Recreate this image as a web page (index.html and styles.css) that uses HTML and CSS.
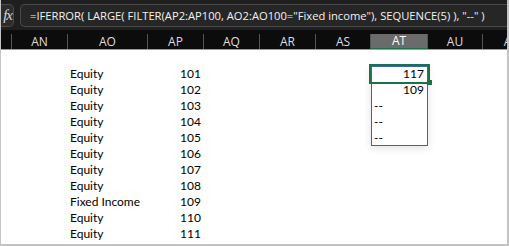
FILE: index.html
```html
<!DOCTYPE html>
<html lang="en">
<head>
    <meta charset="UTF-8">
    <title>Spill</title>
    <link rel="stylesheet" href="styles.css">
</head>
<body>
    <div class="window">
        <div class="formula-bar">
            <div class="fx">fx</div>
            <div class="formula">=IFERROR( LARGE( FILTER(AP2:AP100, AO2:AO100="Fixed income"), SEQUENCE(5) ), "--" )</div>
        </div>

        <div class="col-headers">
            <div class="head"></div>
            <div class="head">AN</div>
            <div class="head">AO</div>
            <div class="head">AP</div>
            <div class="head">AQ</div>
            <div class="head">AR</div>
            <div class="head">AS</div>
            <div class="head active">AT</div>
            <div class="head">AU</div>
            <div class="head">AV</div>
        </div>

        <div class="cells">
            <div class="spacer"></div>

            <div class="spill">
                <div class="value selected">117</div>
                <div class="value">109</div>
                <div class="value text">--</div>
                <div class="value text">--</div>
                <div class="value text">--</div>
            </div>

            <div class="name">Equity</div><div class="num">101</div>
            <div class="name">Equity</div><div class="num">102</div>
            <div class="name">Equity</div><div class="num">103</div>
            <div class="name">Equity</div><div class="num">104</div>
            <div class="name">Equity</div><div class="num">105</div>
            <div class="name">Equity</div><div class="num">106</div>
            <div class="name">Equity</div><div class="num">107</div>
            <div class="name">Equity</div><div class="num">108</div>
            <div class="name">Fixed Income</div><div class="num">109</div>
            <div class="name">Equity</div><div class="num">110</div>
            <div class="name">Equity</div><div class="num">111</div>
        </div>
    </div>
</body>
</html>
```

FILE: styles.css
```css
html, body {
    margin: 0;
    padding: 0;
    background: #fff;
}
.window {
    width: 509px;
    height: 246px;
    box-sizing: border-box;
    border-left: 1px solid #c4c4c4;
    border-right: 2px solid #c4c4c4;
    border-bottom: 2px solid #c4c4c4;
    overflow: hidden;
    background: #fff;
}
.formula-bar {
    height: 30px;
    background: #1f1f1f;
    display: flex;
    align-items: center;
    gap: 6px;
    margin-left: -1px;
}
.fx {
    width: 14px;
    height: 23px;
    box-sizing: border-box;
    background: #2c2c2c;
    border: 1px solid #4a4a4a;
    border-left: none;
    border-radius: 0 5px 5px 0;
    color: #d8d8d8;
    font-family: "Liberation Serif", serif;
    font-style: italic;
    font-size: 15px;
    line-height: 21px;
    text-align: right;
    padding-right: 1px;
    overflow: hidden;
    letter-spacing: -1px;
}
.formula {
    flex: 1;
    height: 23px;
    box-sizing: border-box;
    background: #262626;
    border: 1px solid #4a4a4a;
    border-right: none;
    border-radius: 5px 0 0 5px;
    color: #f2f2f2;
    font-family: "Open Sans", sans-serif;
    font-size: 11.2px;
    line-height: 21px;
    padding-left: 9px;
    white-space: nowrap;
    overflow: hidden;
}
.col-headers {
    display: grid;
    grid-template-columns: 11px 56px 80px 56px 56px 56px 55px 57px 55px 56px;
    height: 18px;
    background: #0c0c0c;
    border-bottom: 1px solid #9a9a9a;
    padding-top: 1px;
    overflow: hidden;
}
.head {
    color: #dedede;
    font-family: "Open Sans", sans-serif;
    font-size: 12px;
    text-align: center;
    border-right: 1px solid #555;
    margin: 3px 0 0;
    line-height: 15px;
}
.head:last-child {
    border-right: none;
}
.head.active {
    background: #6b6b6b;
    color: #fff;
    border-bottom: 2px solid #1e7145;
    line-height: 14px;
}
.cells {
    display: grid;
    grid-template-columns: 11px 56px 80px 56px 56px 56px 55px 57px 55px 1fr;
    grid-auto-rows: 16px;
    font-family: Lato, sans-serif;
    font-size: 12px;
    color: #000;
}
.spacer {
    grid-column: 1 / -1;
}
.name {
    grid-column: 3;
    padding-left: 2px;
    line-height: 16px;
}
.num {
    grid-column: 4;
    text-align: right;
    padding-right: 3px;
    line-height: 16px;
}
.spill {
    grid-column: 8;
    grid-row: 2 / span 5;
    border: 1px solid #3565c0;
    box-shadow: 0 2px 8px rgba(0, 0, 0, 0.12);
    display: flex;
    flex-direction: column;
    position: relative;
}
.value {
    height: 16px;
    line-height: 16px;
    text-align: right;
    padding-right: 3px;
}
.value.text {
    text-align: left;
    padding-left: 2px;
}
.value.selected {
    outline: 2px solid #1e7145;
    outline-offset: 0;
    position: relative;
    margin: -1px -1px 0;
    height: 17px;
    padding-right: 4px;
}
.value.selected::after {
    content: "";
    position: absolute;
    right: -4px;
    bottom: -3px;
    width: 5px;
    height: 5px;
    background: #1e7145;
}
```
